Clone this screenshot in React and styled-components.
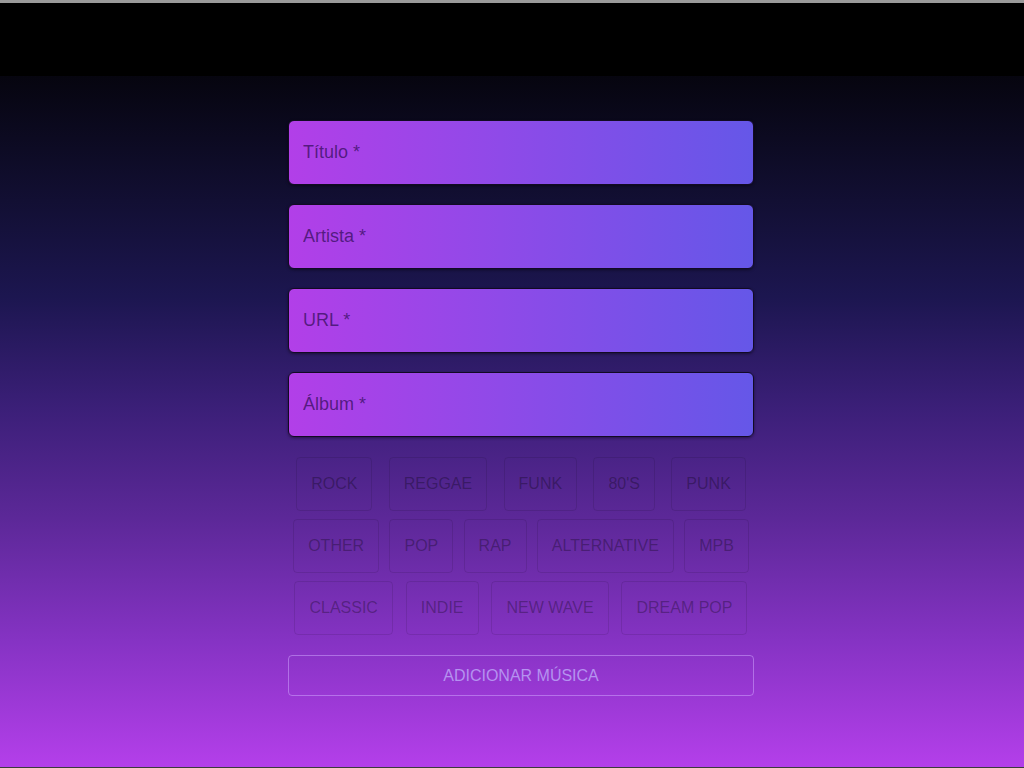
import styled, { createGlobalStyle } from 'styled-components'

const GlobalStyle = createGlobalStyle`
  html, body {
    margin: 0;
    padding: 0;
    height: 100%;
  }
  body {
    font-family: "Liberation Sans", Arial, sans-serif;
  }
  #root {
    min-height: 100%;
  }
`

const genres = [
  'Rock', 'Reggae', 'Funk', "80's", 'Punk',
  'Other', 'Pop', 'Rap', 'Alternative', 'MPB',
  'Classic', 'Indie', 'New Wave', 'Dream Pop',
]

const fields = ['Título *', 'Artista *', 'URL *', 'Álbum *']

function App() {
  return (
    <Page>
      <GlobalStyle />
      <Header />
      <Main>
        <Form onSubmit={e => e.preventDefault()}>
          {fields.map(f => (
            <Field key={f} placeholder={f} />
          ))}
          <Genres>
            <GenreRow>
              {genres.slice(0, 5).map(g => <Genre key={g} type="button">{g}</Genre>)}
            </GenreRow>
            <GenreRow>
              {genres.slice(5, 10).map(g => <Genre key={g} type="button">{g}</Genre>)}
            </GenreRow>
            <GenreRow>
              {genres.slice(10).map(g => <Genre key={g} type="button">{g}</Genre>)}
            </GenreRow>
          </Genres>
          <Submit type="submit">Adicionar Música</Submit>
        </Form>
      </Main>
    </Page>
  )
}

const Page = styled.div`
  min-height: 100vh;
  display: flex;
  flex-direction: column;
  box-sizing: border-box;
  border-bottom: 1px solid #3b3b3b;
`

const Header = styled.header`
  height: 73px;
  background: #000;
  border-top: 3px solid #9a9a9a;
  flex-shrink: 0;
`

const Main = styled.main`
  flex: 1;
  background: linear-gradient(
    to bottom,
    #06050f 0%,
    #120f33 18%,
    #1c1650 32%,
    #3b1f78 48%,
    #5c2898 64%,
    #8633c4 82%,
    #b43fea 100%
  );
  display: flex;
  justify-content: center;
  padding: 44px 0 0 18px;
`

const Form = styled.form`
  width: 466px;
  display: flex;
  flex-direction: column;
`

const Field = styled.input`
  box-sizing: border-box;
  height: 65px;
  margin-bottom: 19px;
  padding: 0 14px;
  border: 1px solid #120a24;
  border-radius: 6px;
  background: linear-gradient(to right, #b23fe8, #6557e8);
  box-shadow: 0 1px 3px rgba(0, 0, 0, 0.45);
  font-family: "Liberation Sans", Arial, sans-serif;
  font-size: 18px;
  color: #4b1f80;
  outline: none;

  &::placeholder {
    color: rgba(55, 15, 95, 0.75);
  }
`

const Genres = styled.div`
  display: flex;
  flex-direction: column;
  gap: 8px;
  margin-top: 1px;
`

const GenreRow = styled.div`
  display: flex;
  justify-content: space-around;
`

const Genre = styled.button`
  height: 54px;
  padding: 0 14px;
  background: transparent;
  border: 1px solid rgba(0, 0, 0, 0.1);
  border-radius: 4px;
  font-family: "Liberation Sans", Arial, sans-serif;
  font-size: 16px;
  text-transform: uppercase;
  color: rgba(0, 0, 0, 0.3);
  cursor: pointer;
`

const Submit = styled.button`
  margin-top: 20px;
  height: 41px;
  background: transparent;
  border: 1px solid rgba(210, 170, 255, 0.5);
  border-radius: 4px;
  font-family: "Liberation Sans", Arial, sans-serif;
  font-size: 16px;
  text-transform: uppercase;
  color: #b592f0;
  cursor: pointer;
`

export default App
